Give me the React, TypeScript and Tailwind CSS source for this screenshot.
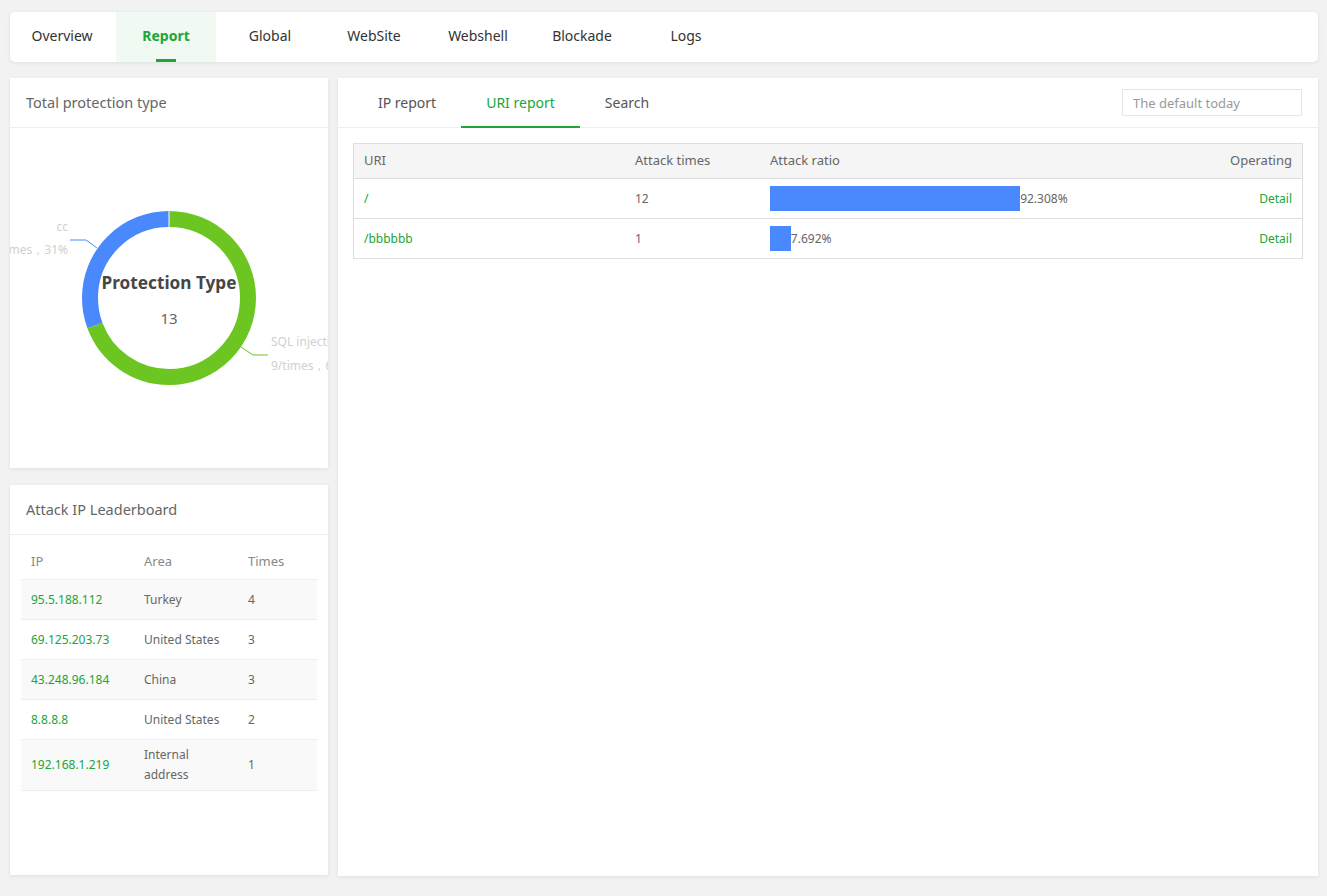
import React from 'react';

const navTabs = ['Overview', 'Report', 'Global', 'WebSite', 'Webshell', 'Blockade', 'Logs'];

const ipRows = [
  { ip: '95.5.188.112', area: 'Turkey', times: 4 },
  { ip: '69.125.203.73', area: 'United States', times: 3 },
  { ip: '43.248.96.184', area: 'China', times: 3 },
  { ip: '8.8.8.8', area: 'United States', times: 2 },
  { ip: '192.168.1.219', area: 'Internal address', times: 1 },
];

const uriRows = [
  { uri: '/', times: 12, ratio: 92.308 },
  { uri: '/bbbbbb', times: 1, ratio: 7.692 },
];

// donut sizes
const R = 79;
const C = 2 * Math.PI * R;
const sqlLen = (C * 9) / 13;
const ccLen = (C * 4) / 13;

function Donut() {
  return (
    <svg width="318" height="340" className="block overflow-hidden">
      <g transform="rotate(-90 159 170)">
        <circle cx="159" cy="170" r={R} fill="none" stroke="#6cc520" strokeWidth="16" strokeDasharray={`${sqlLen} ${C}`} />
        <circle
          cx="159"
          cy="170"
          r={R}
          fill="none"
          stroke="#4a88fe"
          strokeWidth="16"
          strokeDasharray={`${ccLen} ${C}`}
          strokeDashoffset={-sqlLen}
        />
      </g>
      <line x1="159" y1="83" x2="159" y2="99" stroke="#fff" strokeWidth="1" />
      <polyline points="60,112 76,112 87,120" fill="none" stroke="#4a88fe" strokeWidth="1" />
      <polyline points="231,219 243,227 258,227" fill="none" stroke="#6cc520" strokeWidth="1" />
      <g fontFamily='"Noto Sans", sans-serif' fontSize="12" fill="#d0d0d0">
        <text x="58" y="103" textAnchor="end">cc</text>
        <text x="58" y="126" textAnchor="end">4/times，31%</text>
        <text x="261" y="218">SQL injection</text>
        <text x="261" y="242">9/times，69%</text>
      </g>
      <text x="159" y="161" textAnchor="middle" fontFamily='"Noto Sans", sans-serif' fontSize="17.2" fontWeight="700" fill="#464646">
        Protection Type
      </text>
      <text x="159" y="196" textAnchor="middle" fontFamily='"Noto Sans", sans-serif' fontSize="15" fill="#666">
        13
      </text>
    </svg>
  );
}

export default function App() {
  return (
    <div
      className="min-h-screen bg-[#f2f2f2] pt-[12px] pl-[10px] pr-[9px] pb-[20px] text-[#333]"
      style={{ fontFamily: '"Noto Sans", "Liberation Sans", sans-serif' }}
    >
      {/* top nav */}
      <div className="flex h-[50px] gap-1 rounded-[5px] bg-white px-[2px] shadow-[0_1px_4px_rgba(0,0,0,0.08)]">
        {navTabs.map((t) => {
          const active = t === 'Report';
          return (
            <div
              key={t}
              className={
                active
                  ? 'relative flex w-[100px] items-center justify-center bg-[#f0f9f2] pb-[3px] text-[14px] font-bold text-[#20a53a]'
                  : 'relative flex w-[100px] items-center justify-center pb-[3px] text-[14px] text-[#333]'
              }
            >
              {t}
              {active && <span className="absolute bottom-0 left-[40px] h-[3px] w-[20px] bg-[#20a53a]" />}
            </div>
          );
        })}
      </div>

      <div className="mt-[16px] flex gap-[10px]">
        {/* left column */}
        <div className="flex w-[318px] flex-col gap-[17px]">
          <div className="h-[390px] overflow-hidden bg-white shadow-[0_1px_4px_rgba(0,0,0,0.08)]">
            <div className="flex h-[50px] items-center border-b border-[#eee] px-[16px] text-[14.5px] text-[#666]">
              Total protection type
            </div>
            <Donut />
          </div>

          <div className="h-[390px] bg-white shadow-[0_1px_4px_rgba(0,0,0,0.08)]">
            <div className="flex h-[50px] items-center border-b border-[#eee] px-[16px] text-[14.5px] text-[#666]">
              Attack IP Leaderboard
            </div>
            <div className="px-[11px] pt-[7px]">
              <div className="grid h-[38px] grid-cols-[113px_104px_1fr] items-center border-b border-[#eee] pt-[3px] text-[13px] text-[#888]">
                <div className="px-[10px]">IP</div>
                <div className="px-[10px]">Area</div>
                <div className="px-[10px]">Times</div>
              </div>
              {ipRows.map((r, i) => (
                <div
                  key={r.ip}
                  className={
                    i % 2 === 0
                      ? 'grid min-h-[40px] grid-cols-[113px_104px_1fr] items-center border-b border-[#eee] bg-[#f9f9f9] py-[5px] text-[12px] text-[#666]'
                      : 'grid min-h-[40px] grid-cols-[113px_104px_1fr] items-center border-b border-[#eee] bg-white py-[5px] text-[12px] text-[#666]'
                  }
                >
                  <div className="px-[10px] text-[#20a53a]">{r.ip}</div>
                  <div className="px-[10px] leading-[20px]">{r.area === 'Internal address' ? <>Internal<br />address</> : r.area}</div>
                  <div className="px-[10px]">{r.times}</div>
                </div>
              ))}
            </div>
          </div>
        </div>

        {/* right panel */}
        <div className="h-[798px] flex-1 bg-white shadow-[0_1px_4px_rgba(0,0,0,0.08)]">
          <div className="flex h-[50px] items-center justify-between border-b border-[#eee] pl-[15px] pr-[16px]">
            <div className="flex h-full">
              {['IP report', 'URI report', 'Search'].map((t) => (
                <div
                  key={t}
                  className={
                    t === 'URI report'
                      ? 'relative flex items-center px-[25px] text-[14px] text-[#20a53a]'
                      : 'relative flex items-center px-[25px] text-[14px] text-[#555]'
                  }
                >
                  {t}
                  {t === 'URI report' && <span className="absolute bottom-[-1px] left-0 right-0 h-[2px] bg-[#20a53a]" />}
                </div>
              ))}
            </div>
            <input
              placeholder="The default today"
              className="h-[27px] w-[180px] border border-[#e6e6e6] px-[10px] text-[13px] text-[#666] outline-none placeholder:text-[#999]"
            />
          </div>

          <div className="p-[15px]">
            <div className="border border-[#ddd]">
              <div className="grid h-[34px] grid-cols-[271px_135px_1fr_120px] items-center bg-[#f5f5f5] text-[13px] text-[#666]">
                <div className="px-[10px]">URI</div>
                <div className="px-[10px]">Attack times</div>
                <div className="px-[10px]">Attack ratio</div>
                <div className="px-[10px] text-right">Operating</div>
              </div>
              {uriRows.map((r) => (
                <div key={r.uri} className="grid h-[40px] grid-cols-[271px_135px_1fr_120px] items-center border-t border-[#ddd] text-[12px] text-[#666]">
                  <div className="px-[10px] text-[#20a53a]">{r.uri}</div>
                  <div className="px-[10px]">{r.times}</div>
                  <div className="flex items-center px-[10px]">
                    <div className="h-[25px] bg-[#4a88fe]" style={{ width: `${(271 * r.ratio) / 100}px` }} />
                    <span>{r.ratio.toFixed(3)}%</span>
                  </div>
                  <div className="px-[10px] text-right text-[#20a53a]">Detail</div>
                </div>
              ))}
            </div>
          </div>
        </div>
      </div>
    </div>
  );
}
